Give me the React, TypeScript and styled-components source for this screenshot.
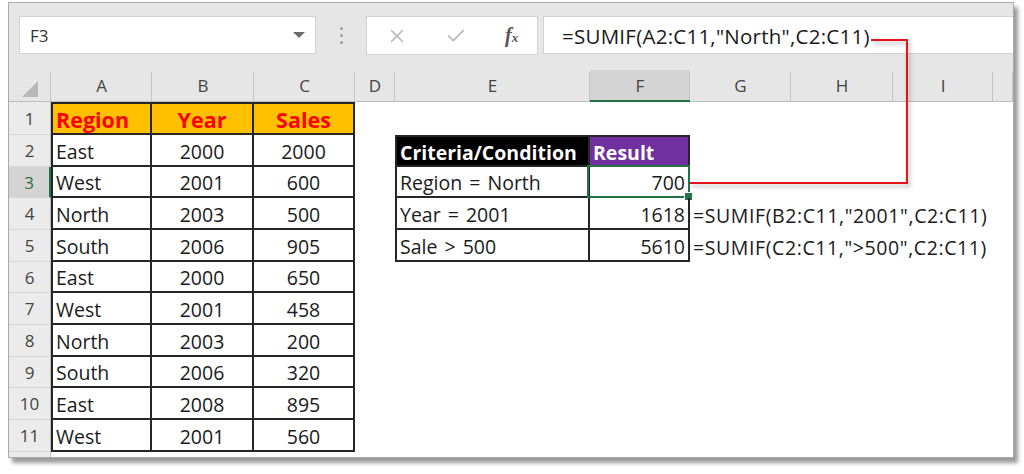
import React from "react";
import styled, { createGlobalStyle } from "styled-components";
import { X, Check } from "lucide-react";

const GlobalStyle = createGlobalStyle`
  html, body {
    margin: 0;
    padding: 0;
    background: #ffffff;
  }
  body {
    font-family: "Open Sans", "Noto Sans", sans-serif;
  }
`;

const COLS = ["A", "B", "C", "D", "E", "F", "G", "H", "I", ""];
const ROW_H = [33, 32, 31, 32, 32, 31, 32, 32, 31, 32, 32, 12];

const DATA = [
  ["Region", "Year", "Sales"],
  ["East", "2000", "2000"],
  ["West", "2001", "600"],
  ["North", "2003", "500"],
  ["South", "2006", "905"],
  ["East", "2000", "650"],
  ["West", "2001", "458"],
  ["North", "2003", "200"],
  ["South", "2006", "320"],
  ["East", "2008", "895"],
  ["West", "2001", "560"],
];

const CRITERIA = [
  ["Criteria/Condition", "Result"],
  ["Region = North", "700"],
  ["Year = 2001", "1618"],
  ["Sale > 500", "5610"],
];

const FORMULAS = [
  '=SUMIF(B2:C11,"2001",C2:C11)',
  '=SUMIF(C2:C11,">500",C2:C11)',
];

type Align = "left" | "center" | "right";

type CellSpec = {
  text?: string;
  bg?: string;
  color?: string;
  bold?: boolean;
  big?: boolean;
  formula?: boolean;
  align?: Align;
  t?: boolean;
  r?: boolean;
  b?: boolean;
  l?: boolean;
  selected?: boolean;
};

// row is 1-based like excel, col 0 = A
const specFor = (row: number, col: number): CellSpec => {
  if (row >= 1 && row <= 11 && col <= 2) {
    const edges = { r: true, b: true, l: col === 0, t: row === 1 };
    const text = DATA[row - 1][col];
    const align: Align = col === 0 ? "left" : "center";
    if (row === 1) {
      return { text, bg: "#ffc000", color: "#ff0000", bold: true, big: true, align, ...edges };
    }
    return { text, align, ...edges };
  }
  if (row >= 2 && row <= 5 && (col === 4 || col === 5)) {
    const edges = { r: true, b: true, l: col === 4, t: row === 2 };
    const text = CRITERIA[row - 2][col - 4];
    if (row === 2) {
      return {
        text,
        bg: col === 4 ? "#000000" : "#7030a0",
        color: "#ffffff",
        bold: true,
        align: "left",
        ...edges,
      };
    }
    return {
      text,
      align: col === 4 ? "left" : "right",
      selected: row === 3 && col === 5,
      ...edges,
    };
  }
  if (col === 6 && (row === 4 || row === 5)) {
    return { text: FORMULAS[row - 4], align: "left", formula: true };
  }
  return {};
};

const App = () => {
  return (
    <>
      <GlobalStyle />
      <Page>
        <Window>
          <Toolbar>
            <NameBox>
              F3
              <Caret />
            </NameBox>
            <DotSep>
              <Dot />
              <Dot />
              <Dot />
            </DotSep>
            <FxBox>
              <X size={22} strokeWidth={1.6} color="#b5b5b5" />
              <Check size={22} strokeWidth={1.8} color="#b5b5b5" />
              <Fx>
                f<sub>x</sub>
              </Fx>
            </FxBox>
            <FormulaBox>=SUMIF(A2:C11,"North",C2:C11)</FormulaBox>
          </Toolbar>
          <Sheet>
            <Corner>
              <svg width="18" height="18" viewBox="0 0 18 18">
                <polygon points="17,1 17,17 1,17" fill="#b8b8b8" />
              </svg>
            </Corner>
            {COLS.map((c, i) => (
              <ColHead key={i} $active={c === "F"}>
                {c}
              </ColHead>
            ))}
            {ROW_H.map((h, ri) => {
              const row = ri + 1;
              return (
                <React.Fragment key={row}>
                  <RowHead $active={row === 3}>{row <= 11 ? row : ""}</RowHead>
                  {COLS.map((_, ci) => {
                    const s = specFor(row, ci);
                    return (
                      <Cell
                        key={ci}
                        $bg={s.bg}
                        $color={s.color}
                        $bold={s.bold}
                        $big={s.big}
                        $formula={s.formula}
                        $align={s.align}
                        $t={s.t}
                        $r={s.r}
                        $b={s.b}
                        $l={s.l}
                      >
                        {s.text}
                        {s.selected ? (
                          <Selection>
                            <FillHandle />
                          </Selection>
                        ) : null}
                      </Cell>
                    );
                  })}
                </React.Fragment>
              );
            })}
          </Sheet>
        </Window>
        <Connector width="1024" height="474" viewBox="0 0 1024 474">
          <polyline
            points="871,40 907,40 907,183 690,183"
            fill="none"
            stroke="#e5141c"
            strokeWidth="2"
          />
        </Connector>
      </Page>
    </>
  );
};

export default App;

const Page = styled.div`
  position: relative;
  width: 1024px;
  height: 474px;
  padding: 2px 0 0 8px;
  box-sizing: border-box;
  background: #ffffff;
  overflow: hidden;
`;

const Window = styled.div`
  width: 1006px;
  height: 456px;
  box-sizing: border-box;
  border: 1px solid #a9a9a9;
  background: #e6e6e6;
  box-shadow: 4px 5px 4px rgba(0, 0, 0, 0.4);
  display: flex;
  flex-direction: column;
  overflow: hidden;
`;

const Toolbar = styled.div`
  height: 67px;
  flex: none;
  display: flex;
  align-items: flex-start;
  padding: 13px 0 0 10px;
  box-sizing: border-box;
`;

const NameBox = styled.div`
  width: 297px;
  height: 38px;
  box-sizing: border-box;
  background: #ffffff;
  border: 1px solid #d2d2d2;
  display: flex;
  align-items: center;
  padding-left: 10px;
  font-size: 17px;
  color: #333333;
`;

const Caret = styled.div`
  margin-left: auto;
  margin-right: 10px;
  width: 0;
  height: 0;
  border-left: 6px solid transparent;
  border-right: 6px solid transparent;
  border-top: 6px solid #6b6b6b;
`;

const DotSep = styled.div`
  width: 50px;
  height: 38px;
  display: flex;
  flex-direction: column;
  align-items: center;
  justify-content: center;
  gap: 4px;
`;

const Dot = styled.div`
  width: 3px;
  height: 3px;
  border-radius: 50%;
  background: #a0a0a0;
`;

const FxBox = styled.div`
  width: 172px;
  height: 39px;
  box-sizing: border-box;
  background: #ffffff;
  border: 1px solid #d2d2d2;
  display: flex;
  align-items: center;
  justify-content: space-around;
`;

const Fx = styled.span`
  font-family: "Liberation Serif", serif;
  font-style: italic;
  font-weight: 700;
  font-size: 20px;
  color: #555555;
  sub {
    font-size: 13px;
    vertical-align: 0;
  }
`;

const FormulaBox = styled.div`
  flex: 1;
  margin-left: 5px;
  height: 38px;
  box-sizing: border-box;
  background: #ffffff;
  border: 1px solid #d2d2d2;
  border-right: none;
  display: flex;
  align-items: center;
  padding: 1px 0 0 18px;
  font-size: 20.5px;
  letter-spacing: 0.25px;
  color: #1a1a1a;
  white-space: nowrap;
`;

const Sheet = styled.div`
  flex: 1;
  display: grid;
  grid-template-columns: 42px 101px 102px 101px 40px 195px 100px 101px 102px 100px 1fr;
  grid-template-rows: 32px ${ROW_H.map((h) => `${h}px`).join(" ")};
  background: #ffffff;
`;

const Corner = styled.div`
  background: #e6e6e6;
  border-bottom: 1px solid #bdbdbd;
  display: flex;
  align-items: flex-end;
  justify-content: center;
  padding-bottom: 3px;
  box-sizing: border-box;
  position: relative;
  &::after {
    content: "";
    position: absolute;
    right: 0;
    top: 2px;
    bottom: 0;
    width: 1px;
    background: #c4c4c4;
  }
`;

const ColHead = styled.div<{ $active?: boolean }>`
  position: relative;
  box-sizing: border-box;
  background: ${({ $active }) => ($active ? "#d4d4d4" : "#e6e6e6")};
  border-bottom: ${({ $active }) => ($active ? "2px solid #217346" : "1px solid #bdbdbd")};
  display: flex;
  align-items: center;
  justify-content: center;
  font-size: 17px;
  color: #444444;
  &::after {
    content: "";
    position: absolute;
    right: 0;
    top: 2px;
    bottom: 0;
    width: 1px;
    background: #c4c4c4;
  }
`;

const RowHead = styled.div<{ $active?: boolean }>`
  box-sizing: border-box;
  background: ${({ $active }) => ($active ? "#d4d4d4" : "#ebebeb")};
  border-bottom: 1px solid #d6d6d6;
  border-right: ${({ $active }) => ($active ? "2px solid #217346" : "1px solid #bdbdbd")};
  display: flex;
  align-items: center;
  justify-content: center;
  font-size: 17px;
  color: ${({ $active }) => ($active ? "#2f6a4c" : "#444444")};
`;

const line = "2px solid #262626";

const Cell = styled.div<{
  $bg?: string;
  $color?: string;
  $bold?: boolean;
  $big?: boolean;
  $formula?: boolean;
  $align?: Align;
  $t?: boolean;
  $r?: boolean;
  $b?: boolean;
  $l?: boolean;
}>`
  position: relative;
  box-sizing: border-box;
  display: flex;
  align-items: center;
  justify-content: ${({ $align }) =>
    $align === "center" ? "center" : $align === "right" ? "flex-end" : "flex-start"};
  padding: 3px 3px 0 3px;
  background: ${({ $bg }) => $bg || "transparent"};
  color: ${({ $color }) => $color || "#1a1a1a"};
  font-weight: ${({ $bold }) => ($bold ? 700 : 400)};
  font-size: ${({ $big }) => ($big ? "21.5px" : "19.5px")};
  letter-spacing: ${({ $formula }) => ($formula ? "0.6px" : "0")};
  word-spacing: 2px;
  line-height: 1;
  white-space: nowrap;
  border-top: ${({ $t }) => ($t ? line : "none")};
  border-right: ${({ $r }) => ($r ? line : "none")};
  border-bottom: ${({ $b }) => ($b ? line : "none")};
  border-left: ${({ $l }) => ($l ? line : "none")};
`;

const Selection = styled.div`
  position: absolute;
  top: -2px;
  left: -3px;
  right: -2px;
  bottom: -2px;
  border: 2px solid #217346;
  pointer-events: none;
`;

const FillHandle = styled.div`
  position: absolute;
  right: -5px;
  bottom: -5px;
  width: 7px;
  height: 7px;
  background: #217346;
  border: 1px solid #ffffff;
`;

const Connector = styled.svg`
  position: absolute;
  top: 0;
  left: 0;
  pointer-events: none;
  filter: drop-shadow(2px 3px 2px rgba(0, 0, 0, 0.3));
`;
